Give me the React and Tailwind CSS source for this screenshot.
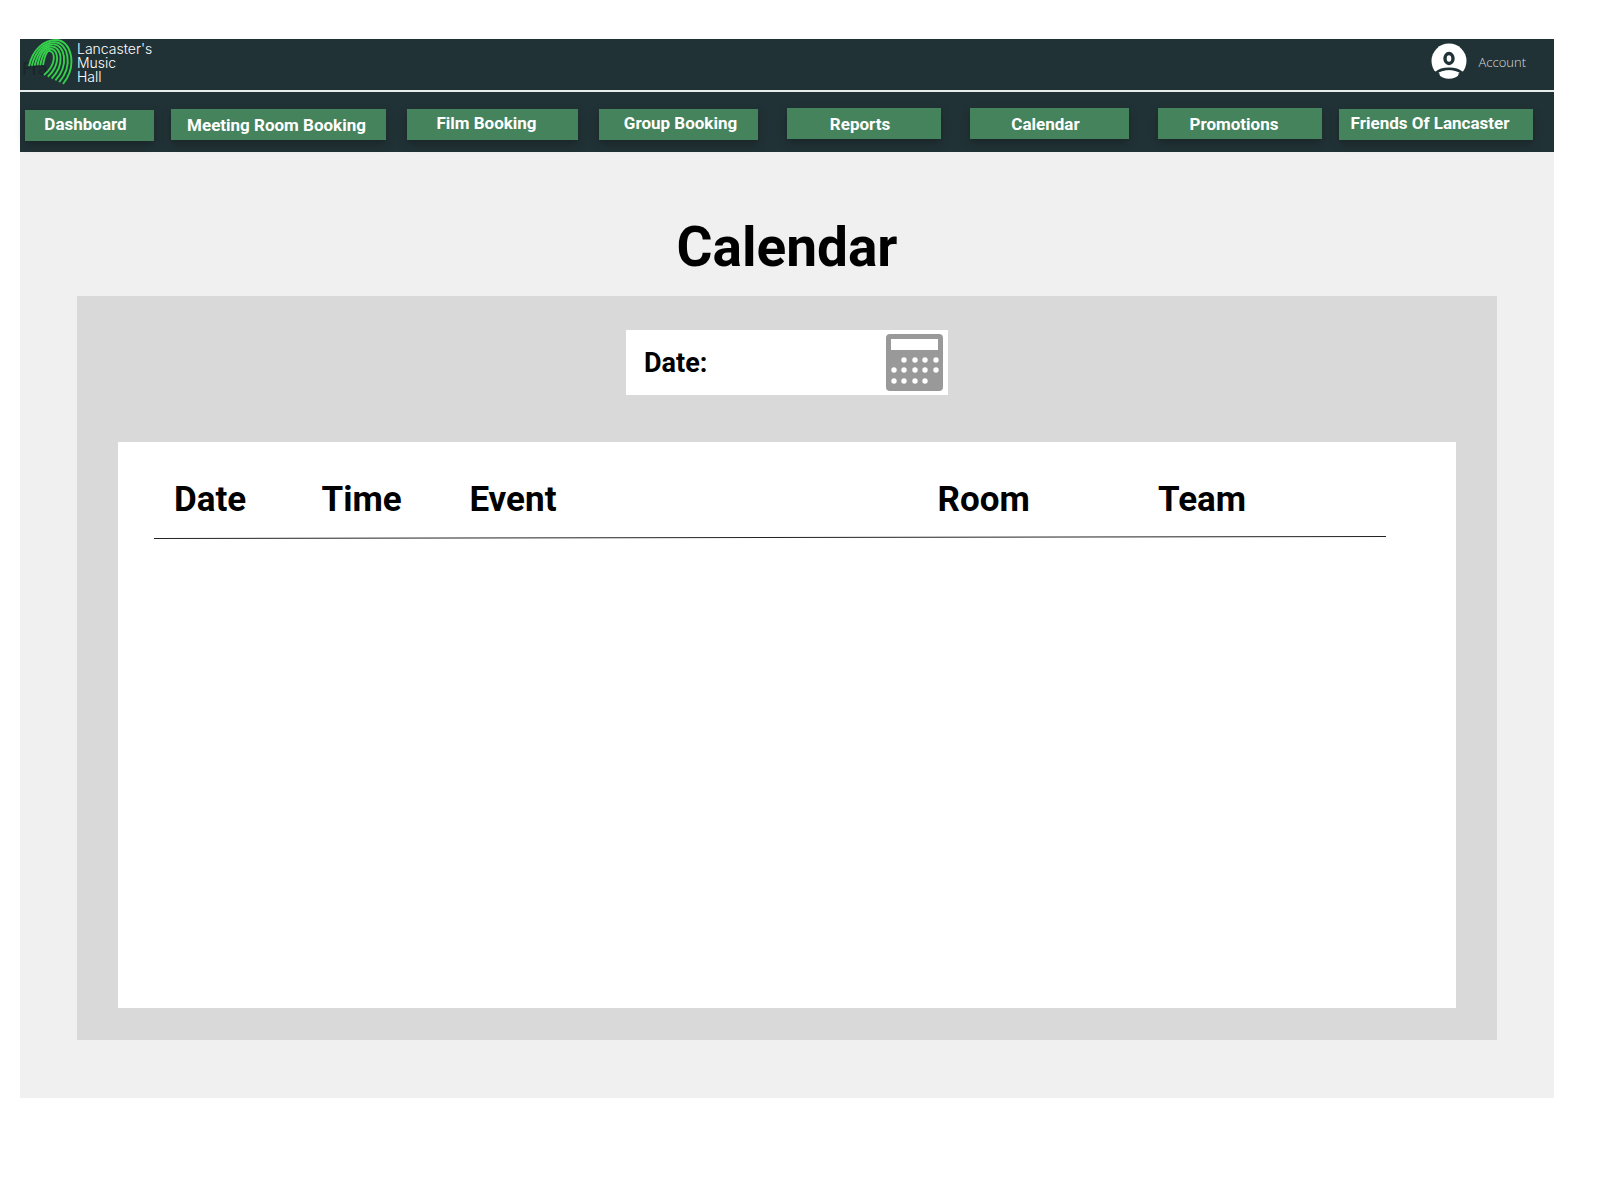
const navItems = [
  { label: "Dashboard", cell: "pt-[2px] pr-[17px]", pad: "pr-2 pb-1" },
  { label: "Meeting Room Booking", cell: "pt-[1px] pr-[21px]", pad: "pr-1" },
  { label: "Film Booking", cell: "pt-[1px] pr-[21px]", pad: "pr-3 pb-1" },
  { label: "Group Booking", cell: "pt-[1px] pr-[29px]", pad: "pl-1 pb-1" },
  { label: "Reports", cell: "pr-[29px]", pad: "pr-2" },
  { label: "Calendar", cell: "pr-[29px]", pad: "pr-2" },
  { label: "Promotions", cell: "pr-[17px]", pad: "pr-3" },
  { label: "Friends Of Lancaster", cell: "pt-[1px]", pad: "pr-3 pb-1" },
];

const columns = [
  { label: "Date", width: "w-[13.6%] pl-5" },
  { label: "Time", width: "w-[12%]" },
  { label: "Event", width: "w-[38%]" },
  { label: "Room", width: "w-[17.9%]" },
  { label: "Team", width: "w-[18.5%]" },
];

const strands = [0, 1, 2, 3, 4, 5].map((i) => {
  const t = i / 5;
  return [
    `M${1 + 14 * t} ${27 - t}`,
    `C${5 + 12 * t} ${10 + 6 * t} ${16 + 3 * t} ${1 + 10 * t} ${28 - 6 * t} ${1 + 11 * t}`,
    `C${43 - 16 * t} ${1 + 12 * t} ${50 - 21 * t} ${26 - t} ${35 - 19 * t} ${45 - 9 * t}`,
  ].join("");
});

function Logo() {
  return (
    <svg viewBox="0 0 46 46" className="relative h-[46px] w-[46px]" fill="none" stroke="#35cf4b" strokeWidth="1.900" aria-hidden="true">
      {strands.map((d) => (
        <path key={d} d={d} />
      ))}
    </svg>
  );
}

function AccountIcon() {
  return (
    <svg viewBox="0 0 36 36" className="h-9 w-9" aria-hidden="true">
      <circle cx="18" cy="18" r="17.500" fill="#fff" />
      <ellipse cx="18" cy="15.500" rx="4" ry="5" fill="#fff" stroke="#213236" strokeWidth="3.400" />
      <path d="M5 30C11 24.500 25 24.500 31 30" fill="none" stroke="#213236" strokeWidth="2.800" />
      <path d="M3 28L8.500 30.500L14 36H0V28ZM33 28L27.500 30.500L22 36H36V28Z" fill="#213236" />
      <ellipse cx="18" cy="31.500" rx="9.500" ry="4" fill="#fff" />
    </svg>
  );
}

function DatePickerIcon() {
  const dots = [
    [18, 26], [29, 26], [39, 26], [50, 26],
    [8, 36], [18, 36], [29, 36], [39, 36], [50, 36],
    [8, 47], [18, 47], [29, 47], [39, 47],
  ];
  return (
    <svg viewBox="0 0 57 57" className="h-[57px] w-[57px]" aria-hidden="true">
      <rect width="57" height="57" rx="4" fill="#999" />
      <rect x="5" y="5" width="47" height="11" fill="#fff" />
      {dots.map(([x, y]) => (
        <circle key={`${x}-${y}`} cx={x} cy={y} r="2.700" fill="#fff" />
      ))}
    </svg>
  );
}

export default function App() {
  return (
    <div className="min-h-screen bg-white pt-[39px] pr-[46px] pb-[84px] pl-5 font-['Roboto',sans-serif]">
      <header className="bg-[#213236]">
        <div className="relative flex h-[51px] items-start justify-between pr-7 pl-2">
          <span className="absolute top-5 left-0.5 text-lg leading-5 font-medium text-[#1a282b]">Fra</span>
          <a href="#home" className="flex items-start gap-[3px] font-['Inter',sans-serif] text-[14px] leading-[14px] font-light text-white">
            <Logo />
            <span className="pt-[3px]">
              Lancaster's
              <br />
              Music
              <br />
              Hall
            </span>
          </a>
          <button type="button" className="flex items-center gap-3 pt-1 font-['Open_Sans',sans-serif] text-[13px] font-light text-[#d5dada]">
            <AccountIcon />
            <span className="pt-1">Account</span>
          </button>
        </div>
        <nav className="grid h-[62px] grid-cols-[146fr_236fr_192fr_188fr_183fr_188fr_181fr_194fr] items-start border-t-2 border-[#e8ecec] pt-4 pr-[21px] pl-[5px]">
          {navItems.map((item) => (
            <div key={item.label} className={item.cell}>
              <button
                type="button"
                className={`h-[31px] w-full bg-[#45835d] text-[17px] leading-5 font-bold whitespace-nowrap text-white shadow-[0_4px_10px_rgba(0,0,0,0.25)] ${item.pad}`}
              >
                {item.label}
              </button>
            </div>
          ))}
        </nav>
      </header>

      <main className="bg-[#f0f0f0] px-[57px] pt-[63px] pb-[58px]">
        <h1 className="text-center text-[55px] leading-[64px] font-bold text-black">Calendar</h1>
        <section className="mt-[17px] bg-[#d9d9d9] px-[41px] pt-[34px] pb-8">
          <div className="mx-auto flex h-[65px] w-[322px] items-center bg-white pr-[5px] pl-[18px]">
            <label htmlFor="date" className="text-[27px] leading-8 font-bold text-black">
              Date:
            </label>
            <input id="date" type="text" className="ml-2 min-w-0 flex-1 text-xl outline-none" />
            <button type="button" aria-label="Choose date">
              <DatePickerIcon />
            </button>
          </div>
          <div className="mt-[47px] min-h-[566px] bg-white pt-[38px] pr-[70px] pl-9">
            <table className="w-full table-fixed text-left">
              <thead>
                <tr className="text-[35px] leading-10 text-black">
                  {columns.map((column) => (
                    <th key={column.label} scope="col" className={`p-0 font-bold ${column.width}`}>
                      {column.label}
                    </th>
                  ))}
                </tr>
              </thead>
            </table>
            <svg viewBox="0 0 1232 3" preserveAspectRatio="none" className="mt-4 h-[3px] w-full" aria-hidden="true">
              <line x1="0" y1="2.500" x2="1232" y2="0.500" stroke="#222" strokeWidth="1" />
            </svg>
          </div>
        </section>
      </main>
    </div>
  );
}
